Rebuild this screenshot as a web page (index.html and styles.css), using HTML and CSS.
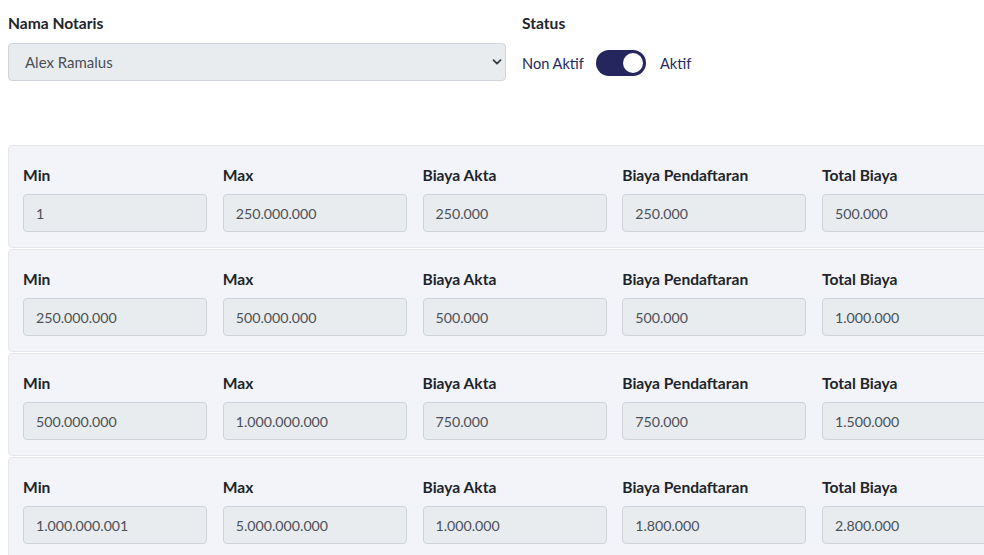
FILE: index.html
```html
<!DOCTYPE html>
<html lang="id">
<head>
<meta charset="utf-8">
<link rel="stylesheet" href="styles.css">
</head>
<body>
<div class="top">
  <div class="field notaris">
    <label class="lbl">Nama Notaris</label>
    <div class="select">
      <span>Alex Ramalus</span>
      <svg class="chev" width="10" height="8" viewBox="0 0 10 8"><path d="M1.5 2.2 L5 5.6 L8.5 2.2" fill="none" stroke="#343a40" stroke-width="1.8" stroke-linecap="round" stroke-linejoin="round"/></svg>
    </div>
  </div>
  <div class="field status">
    <label class="lbl">Status</label>
    <div class="switchrow">
      <span>Non Aktif</span>
      <span class="switch"><span class="knob"></span></span>
      <span>Aktif</span>
    </div>
  </div>
</div>

<div class="cards">
  <div class="card">
    <div class="col"><div class="lbl">Min</div><div class="inp">1</div></div>
    <div class="col"><div class="lbl">Max</div><div class="inp">250.000.000</div></div>
    <div class="col"><div class="lbl">Biaya Akta</div><div class="inp">250.000</div></div>
    <div class="col"><div class="lbl">Biaya Pendaftaran</div><div class="inp">250.000</div></div>
    <div class="col"><div class="lbl">Total Biaya</div><div class="inp">500.000</div></div>
  </div>
  <div class="card">
    <div class="col"><div class="lbl">Min</div><div class="inp">250.000.000</div></div>
    <div class="col"><div class="lbl">Max</div><div class="inp">500.000.000</div></div>
    <div class="col"><div class="lbl">Biaya Akta</div><div class="inp">500.000</div></div>
    <div class="col"><div class="lbl">Biaya Pendaftaran</div><div class="inp">500.000</div></div>
    <div class="col"><div class="lbl">Total Biaya</div><div class="inp">1.000.000</div></div>
  </div>
  <div class="card">
    <div class="col"><div class="lbl">Min</div><div class="inp">500.000.000</div></div>
    <div class="col"><div class="lbl">Max</div><div class="inp">1.000.000.000</div></div>
    <div class="col"><div class="lbl">Biaya Akta</div><div class="inp">750.000</div></div>
    <div class="col"><div class="lbl">Biaya Pendaftaran</div><div class="inp">750.000</div></div>
    <div class="col"><div class="lbl">Total Biaya</div><div class="inp">1.500.000</div></div>
  </div>
  <div class="card">
    <div class="col"><div class="lbl">Min</div><div class="inp">1.000.000.001</div></div>
    <div class="col"><div class="lbl">Max</div><div class="inp">5.000.000.000</div></div>
    <div class="col"><div class="lbl">Biaya Akta</div><div class="inp">1.000.000</div></div>
    <div class="col"><div class="lbl">Biaya Pendaftaran</div><div class="inp">1.800.000</div></div>
    <div class="col"><div class="lbl">Total Biaya</div><div class="inp">2.800.000</div></div>
  </div>
</div>
</body>
</html>
```
FILE: styles.css
```css
html, body {
  margin: 0;
  padding: 0;
  background: #ffffff;
  overflow: hidden;
}
body {
  font-family: Lato, "Liberation Sans", sans-serif;
  font-size: 15px;
  color: #212529;
  padding: 12px 0 0 8px;
  width: 1200px;
}
.top {
  display: flex;
  gap: 16px;
}
.field {
  display: flex;
  flex-direction: column;
}
.notaris {
  width: 498px;
}
.lbl {
  display: block;
  font-weight: 700;
  font-size: 15.6px;
  line-height: 22px;
  margin-bottom: 9px;
  color: #212529;
}
.select {
  height: 38px;
  box-sizing: border-box;
  border: 1px solid #ced4da;
  border-radius: 4px;
  background: #e9ecef;
  color: #495057;
  display: flex;
  align-items: center;
  justify-content: space-between;
  padding: 0 3px 0 16px;
}
.switchrow {
  display: flex;
  align-items: center;
  height: 38px;
  padding-top: 1px;
  color: #262a5e;
  font-size: 14.6px;
}
.switch {
  width: 50px;
  height: 26px;
  border-radius: 13px;
  background: #26265f;
  margin: 0 14px 0 12px;
  position: relative;
  display: inline-block;
}
.knob {
  position: absolute;
  right: 3px;
  top: 3px;
  width: 20px;
  height: 20px;
  border-radius: 50%;
  background: #ffffff;
}
.cards {
  margin-top: 63px;
  display: flex;
  flex-direction: column;
  gap: 1px;
}
.card {
  display: grid;
  grid-template-columns: repeat(5, 184px);
  column-gap: 15.75px;
  background: #f3f4f9;
  border: 1px solid #e6e7ec;
  border-radius: 4px;
  padding: 18px 14px 15px;
  width: 1100px;
}
.card .lbl {
  margin-bottom: 8px;
}
.inp {
  height: 38px;
  box-sizing: border-box;
  border: 1px solid #ced4da;
  border-radius: 4px;
  background: #e9ecef;
  color: #495057;
  display: flex;
  align-items: center;
  padding: 0 12px;
  font-size: 14.2px;
}
```
